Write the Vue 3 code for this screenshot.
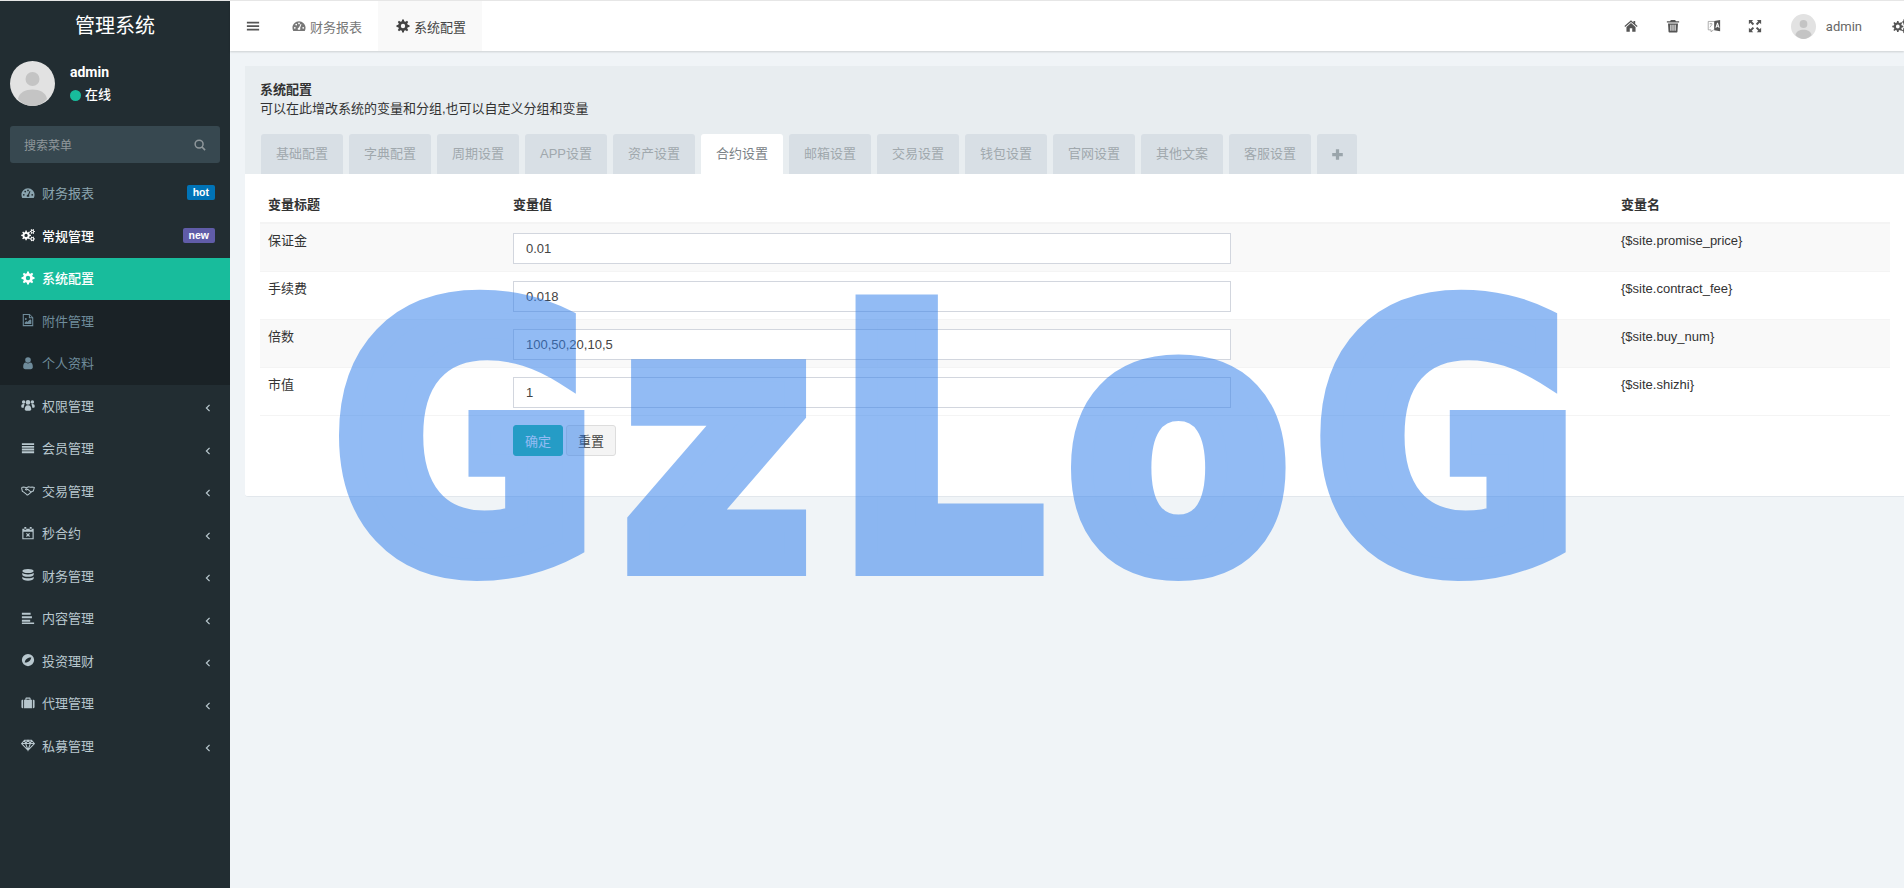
<script setup>
const dot = (x, y, r) => `M${x - r} ${y}a${r} ${r} 0 1 0 ${r * 2} 0a${r} ${r} 0 1 0 ${-r * 2} 0z`

// gear outline, teeth are plain trapezoids
const gear = (cx, cy, R, r, teeth, hole) => {
  let d = ''
  const step = (Math.PI * 2) / teeth
  for (let i = 0; i < teeth; i++) {
    const a = i * step
    const pts = [[a - step * 0.3, r], [a - step * 0.17, R], [a + step * 0.17, R], [a + step * 0.3, r]]
    pts.forEach(([t, l], j) => {
      const x = (cx + Math.cos(t) * l).toFixed(2)
      const y = (cy + Math.sin(t) * l).toFixed(2)
      d += `${i === 0 && j === 0 ? 'M' : 'L'}${x} ${y}`
    })
  }
  return d + 'z' + dot(cx, cy, hole)
}

const icons = {
  bars: { d: 'M1 3h14v2H1zM1 7h14v2H1zM1 11h14v2H1z' },
  dashboard: { d: 'M8 2.5C3.9 2.5.5 5.9.5 10c0 1.2.3 2.4.8 3.4.1.2.3.3.5.3h12.4c.2 0 .4-.1.5-.3.5-1 .8-2.2.8-3.4 0-4.1-3.4-7.5-7.5-7.5z' + dot(3.2, 10, 1) + dot(4.8, 6.4, 1) + dot(8, 5, 1) + dot(12.8, 10, 1) + 'M10.8 6l-1.6 4.2c.5.5.5 1.6-.2 2.1H7c-.8-.6-.7-2 .4-2.4.2-.1.4-.1.6-.1L9.8 5.6z' },
  cog: { d: gear(8, 8, 7.5, 5.6, 8, 2.5) },
  cogs: { d: gear(5.8, 8.5, 5.6, 4.1, 8, 1.9) + gear(13, 4, 2.9, 2.1, 6, 1) + gear(13, 12.5, 2.9, 2.1, 6, 1) },
  users: { d: dot(8, 5, 2.6) + dot(3, 4.5, 2) + dot(13, 4.5, 2) + 'M4.3 13.2c0-3 1-5 3.7-5s3.7 2 3.7 5c0 .9-.8 1.3-1.6 1.3H5.9c-.8 0-1.6-.4-1.6-1.3zM.3 9.5c0-1.8.7-2.6 2.7-2.6.4 0 .8.2 1.1.4C3.5 8.2 3.1 9.5 3.1 11H1.1C.6 11 .3 10.5.3 9.5zM15.7 9.500c0-1.8-.7-2.6-2.7-2.6-.4 0-.8.2-1.1.4.6.9 1 2.2 1 3.7h2c.5 0 .8-.5.8-1.5z' },
  list: { d: 'M1 2.5h14v2.2H1zM1 5.6h14v2.2H1zM1 8.7h14v2.2H1zM1 11.8h14V14H1z' },
  handshake: { s: 'M.6 5.2l2.6-.7 3.2.9L8.6 4.4l2.2.5 2-.4 2.6.7M.6 5.200l1 4.400 1.2.5 3.6 3c.8.6 1.6.5 2.2-.1l3.8-3.2 1.6-.6 1.4-4.500M6.400 5.400L5.200 7.600c.7.7 1.700.4 2.400-.5l4.200 3.600', w: 1.2 },
  calendar: { d: 'M1.5 3h13v12.2h-13zM2.8 6.5v7.4h10.4V6.5zM3.8 1h2.2v3.200H3.800zM10 1h2.200v3.200H10z', s: 'M6.200 8.400l3.600 3.600M9.800 8.400l-3.600 3.600', w: 1.3 },
  database: { d: 'M8 1c3.6 0 6.5 1 6.5 2.4S11.600 5.800 8 5.800 1.500 4.800 1.500 3.400 4.400 1 8 1zM1.500 5.500c1 1.200 3.600 1.900 6.500 1.900s5.500-.7 6.500-1.900v2.200c0 1.300-2.900 2.400-6.500 2.400S1.500 9 1.500 7.700zM1.500 9.900c1 1.200 3.600 1.900 6.500 1.900s5.500-.7 6.500-1.900v2.200c0 1.300-2.900 2.400-6.500 2.400s-6.500-1.100-6.500-2.400z' },
  align: { d: 'M1 2h10v2.200H1zM1 6h11.500v2.200H1zM1 10h9.500v2.200H1zM1 13h14v1.800H1z' },
  compass: { d: dot(8, 8, 7) + 'M4.200 10.800c.5-2.600 2-4.600 4.600-5.300 1-.3 2.400-.3 3-.3-.5 2.600-2 4.600-4.600 5.300-1 .3-2.400.3-3 .3z' },
  suitcase: { d: 'M.5 5.500c0-.8.6-1.300 1.300-1.300h.7V14h-.7c-.7 0-1.300-.5-1.300-1.300zM3.500 4.200H5V3c0-.8.6-1.300 1.300-1.300h3.400c.7 0 1.300.5 1.300 1.300v1.200h1.500V14h-9zM6.200 3v1.200h3.600V3zM13.500 4.200h.7c.7 0 1.300.5 1.300 1.300v7.200c0 .8-.6 1.300-1.300 1.300h-.7z' },
  diamond: { s: 'M4 2.500h8l3.300 3.800L8 14 .7 6.300zM.7 6.300h14.600M5.300 6.300L8 14l2.700-7.700M4 2.500l1.300 3.800L8 2.500l2.700 3.800L12 2.500', w: 1.2 },
  image: { d: 'M2 1h8l4 4v10H2zM3.200 2.200v11.600h9.600V6H9V2.200zM10.200 2.500v2.300h2.300z' + dot(5.5, 6.8, 1.1) + 'M4.200 12.500V11L6 9.200l1.200 1.200 3.300-3.300 1.300 1.300v4.100z' },
  user: { d: dot(8, 4.5, 3.2) + 'M2.500 12.500c0-3 1-5 2.800-5 .6.5 1.600 1 2.700 1s2.100-.5 2.700-1c1.800 0 2.800 2 2.800 5 0 1.500-1 2.500-2.400 2.500H4.900c-1.400 0-2.400-1-2.400-2.500z' },
  home: { d: 'M8 1.500L.5 8l.8 1L8 3.400 14.700 9l.8-1-2.700-2.300V2.200h-2V4zM8 4.600L2.800 9v5.500h3.800v-3.800h2.800v3.800h3.800V9z' },
  trash: { d: 'M5.500 1h5l.8 1.600H15V4H1V2.600h3.700zM2.300 5h11.400l-.6 9.600c0 .5-.5.9-1 .9H3.900c-.5 0-1-.4-1-.9zM5 6.500v7h1.200v-7zM7.400 6.500v7h1.200v-7zM9.800 6.500v7H11v-7z' },
  language: { d: 'M8.200 2.200L15 1v13l-6.800-1.200zM11.500 4.200L9.600 10h1.200l.4-1.200h1.600l.4 1.200h1.200l-1.900-5.800zM11.600 7.600l.4-1.600.4 1.600z', s: 'M8.200 2.800H1.400v9.600h3.200v2.200l3-2.200M3 5.500h3M4.500 4.500v1M3.300 9.500L5.800 6', w: .9 },
  expand: { d: 'M1 1h5L4.300 2.700 7 5.400 5.400 7 2.700 4.300 1 6zM15 1v5l-1.700-1.700L10.600 7 9 5.400l2.700-2.700L10 1zM1 15v-5l1.700 1.700L5.400 9 7 10.600l-2.700 2.700L6 15zM15 15h-5l1.700-1.700L9 10.600 10.600 9l2.700 2.700L15 10z' },
  search: { s: 'M6.800 1.500a5.300 5.300 0 1 0 0 10.600 5.300 5.300 0 0 0 0-10.600zM10.800 10.800l4 4', w: 2 },
  plus: { d: 'M6 1.500h4V6h4.500v4H10v4.500H6V10H1.500V6H6z' },
  angle: { s: 'M10.500 3L5.500 8l5 5', w: 2 }
}

const menu = [
  { icon: 'dashboard', name: '财务报表', badge: 'hot', dim: true },
  { icon: 'cogs', name: '常规管理', badge: 'new', open: true },
  { icon: 'cog', name: '系统配置', active: true },
  { icon: 'image', name: '附件管理', sub: true },
  { icon: 'user', name: '个人资料', sub: true },
  { icon: 'users', name: '权限管理', arrow: true },
  { icon: 'list', name: '会员管理', arrow: true },
  { icon: 'handshake', name: '交易管理', arrow: true },
  { icon: 'calendar', name: '秒合约', arrow: true },
  { icon: 'database', name: '财务管理', arrow: true },
  { icon: 'align', name: '内容管理', arrow: true },
  { icon: 'compass', name: '投资理财', arrow: true },
  { icon: 'suitcase', name: '代理管理', arrow: true },
  { icon: 'diamond', name: '私募管理', arrow: true }
]

const tabs = ['基础配置', '字典配置', '周期设置', 'APP设置', '资产设置', '合约设置', '邮箱设置', '交易设置', '钱包设置', '官网设置', '其他文案', '客服设置']

const rows = [
  { title: '保证金', value: '0.01', name: '{$site.promise_price}' },
  { title: '手续费', value: '0.018', name: '{$site.contract_fee}' },
  { title: '倍数', value: '100,50,20,10,5', name: '{$site.buy_num}' },
  { title: '市值', value: '1', name: '{$site.shizhi}' }
]
</script>

<template>
  <div class="app">
    <aside class="sidebar">
      <div class="logo">管理系统</div>
      <div class="user-panel">
        <svg class="avatar" viewBox="0 0 45 45">
          <circle cx="22.5" cy="22.5" r="22.5" fill="#e2e2e2" />
          <circle cx="22.5" cy="18" r="7" fill="#c4c4c4" />
          <path d="M8 38c1-6.500 7.500-9.500 14.500-9.500S36 31.500 37 38c-3.800 4.400-9 7-14.500 7S11.800 42.400 8 38z" fill="#c4c4c4" />
        </svg>
        <div class="user-info">
          <div class="user-name">admin</div>
          <div class="user-status"><i class="status-dot"></i>在线</div>
        </div>
      </div>
      <div class="search">
        <span>搜索菜单</span>
        <svg class="ico" viewBox="0 0 16 16"><path :d="icons.search.s" fill="none" stroke="currentColor" :stroke-width="icons.search.w" /></svg>
      </div>
      <ul class="menu">
        <li
          v-for="item in menu"
          :key="item.name"
          class="menu-item"
          :class="{ dim: item.dim, open: item.open, active: item.active, sub: item.sub }"
        >
          <svg class="ico" viewBox="0 0 16 16" fill-rule="evenodd">
            <path v-if="icons[item.icon].d" :d="icons[item.icon].d" fill="currentColor" />
            <path v-if="icons[item.icon].s" :d="icons[item.icon].s" fill="none" stroke="currentColor" :stroke-width="icons[item.icon].w" />
          </svg>
          <span class="menu-name">{{ item.name }}</span>
          <b v-if="item.badge" class="badge" :class="item.badge">{{ item.badge }}</b>
          <svg v-if="item.arrow" class="arrow" viewBox="0 0 16 16"><path :d="icons.angle.s" fill="none" stroke="currentColor" :stroke-width="icons.angle.w" /></svg>
        </li>
      </ul>
    </aside>

    <main class="main">
      <header class="navbar">
        <a class="toggle">
          <svg class="ico" viewBox="0 0 16 16"><path :d="icons.bars.d" fill="currentColor" /></svg>
        </a>
        <a class="nav-tab first">
          <svg class="ico" viewBox="0 0 16 16" fill-rule="evenodd"><path :d="icons.dashboard.d" fill="currentColor" /></svg>
          财务报表
        </a>
        <a class="nav-tab current">
          <svg class="ico" viewBox="0 0 16 16" fill-rule="evenodd"><path :d="icons.cog.d" fill="currentColor" /></svg>
          系统配置
        </a>
        <div class="nav-right">
          <a v-for="n in ['home', 'trash', 'language', 'expand']" :key="n" class="nav-icon">
            <svg class="ico" viewBox="0 0 16 16" fill-rule="evenodd">
              <path :d="icons[n].d" fill="currentColor" />
              <path v-if="icons[n].s" :d="icons[n].s" fill="none" stroke="#999" :stroke-width="icons[n].w" />
            </svg>
          </a>
          <svg class="nav-avatar" viewBox="0 0 45 45">
            <circle cx="22.5" cy="22.5" r="22.500" fill="#e2e2e2" />
            <circle cx="22.5" cy="18" r="7" fill="#c4c4c4" />
            <path d="M8 38c1-6.500 7.500-9.500 14.500-9.500S36 31.500 37 38c-3.800 4.400-9 7-14.500 7S11.800 42.400 8 38z" fill="#c4c4c4" />
          </svg>
          <span class="nav-name">admin</span>
          <svg class="ico nav-cogs" viewBox="0 0 16 16" fill-rule="evenodd"><path :d="icons.cogs.d" fill="currentColor" /></svg>
        </div>
      </header>

      <section class="content">
        <div class="panel">
          <div class="panel-head">
            <div class="panel-title">系统配置</div>
            <div class="panel-desc">可以在此增改系统的变量和分组,也可以自定义分组和变量</div>
            <ul class="tabs">
              <li v-for="t in tabs" :key="t" class="tab" :class="{ current: t === '合约设置' }">{{ t }}</li>
              <li class="tab add">
                <svg viewBox="0 0 16 16"><path :d="icons.plus.d" fill="currentColor" /></svg>
              </li>
            </ul>
          </div>
          <div class="panel-body">
            <table class="config">
              <colgroup>
                <col class="c1" />
                <col class="c2" />
                <col />
              </colgroup>
              <thead>
                <tr>
                  <th>变量标题</th>
                  <th>变量值</th>
                  <th>变量名</th>
                </tr>
              </thead>
              <tbody>
                <tr v-for="row in rows" :key="row.name">
                  <td>{{ row.title }}</td>
                  <td><input class="field" type="text" :value="row.value" /></td>
                  <td>{{ row.name }}</td>
                </tr>
              </tbody>
              <tfoot>
                <tr>
                  <td></td>
                  <td class="actions">
                    <button class="btn ok">确定</button>
                    <button class="btn reset">重置</button>
                  </td>
                  <td></td>
                </tr>
              </tfoot>
            </table>
          </div>
        </div>
      </section>
    </main>

    <div class="watermark">GzLoG</div>
  </div>
</template>

<style>
html, body {
  margin: 0;
  background: #f0f4f7;
}
</style>

<style scoped>
.app {
  position: relative;
  display: flex;
  min-height: 888px;
  box-sizing: border-box;
  border-top: 1px solid #e6e6e6;
  overflow: hidden;
  font-family: "Liberation Sans", "Noto Sans CJK SC", sans-serif;
  font-size: 13px;
  color: #333;
}

.ico {
  width: 14px;
  height: 14px;
  flex: none;
}

/* sidebar */
.sidebar {
  width: 230px;
  flex: none;
  background: #222d32;
}
.logo {
  height: 50px;
  line-height: 50px;
  text-align: center;
  color: #fff;
  font-size: 20px;
}
.user-panel {
  display: flex;
  gap: 15px;
  padding: 10px;
  color: #fff;
}
.avatar {
  width: 45px;
  height: 45px;
  flex: none;
}
.user-name {
  margin-top: 1px;
  font-family: Roboto, sans-serif;
  font-weight: 700;
  font-size: 14px;
  line-height: 20px;
}
.user-status {
  display: flex;
  align-items: center;
  gap: 4px;
  margin-top: 3px;
  font-weight: 500;
  line-height: 20px;
}
.status-dot {
  width: 11px;
  height: 11px;
  border-radius: 50%;
  background: #18bc9c;
}
.search {
  display: flex;
  align-items: center;
  justify-content: space-between;
  height: 37px;
  margin: 10px 10px 9.5px;
  padding: 0 14px;
  box-sizing: border-box;
  border-radius: 3px;
  background: #374850;
  color: #8f979b;
  font-size: 12px;
}
.search .ico {
  width: 12px;
  height: 12px;
}
.menu {
  margin: 0;
  padding: 0;
  list-style: none;
}
.menu-item {
  display: flex;
  align-items: center;
  height: 42.5px;
  padding: 0 15px 2px 21px;
  box-sizing: border-box;
  color: #b8c7ce;
}
.menu-name {
  margin-left: 7px;
}
.menu-item.dim {
  color: #8aa4af;
}
.menu-item.open {
  color: #fff;
  font-weight: 500;
}
.menu-item.active {
  background: #18bc9c;
  color: #fff;
  font-weight: 500;
}
.menu-item.sub {
  background: #1a2226;
  color: #6f8c9b;
}
.badge {
  margin-left: auto;
  padding: 0 6px;
  height: 15px;
  line-height: 15px;
  border-radius: 2px;
  color: #fff;
  font-size: 10.5px;
  font-weight: 700;
}
.badge.hot {
  background: #0073b7;
}
.badge.new {
  background: #605ca8;
}
.arrow {
  width: 10px;
  height: 10px;
  margin: 6px 2px 0 auto;
  color: #b8c7ce;
}

/* top bar */
.main {
  flex: 1;
  min-width: 0;
}
.navbar {
  position: relative;
  display: flex;
  height: 50px;
  background: #fff;
  color: #666;
  box-shadow: 0 1px 2px rgba(0, 0, 0, .15);
  overflow: hidden;
}
.toggle {
  width: 45px;
  display: flex;
  align-items: center;
  justify-content: center;
  color: #555;
}
.nav-tab {
  display: flex;
  align-items: center;
  gap: 4px;
  width: 104px;
  padding-left: 18px;
  box-sizing: border-box;
  color: #777;
}
.nav-tab.first {
  width: 103px;
  padding-left: 17px;
}
.nav-tab.current {
  background: #f9f9f9;
  color: #444;
}
.nav-right {
  display: flex;
  align-items: center;
  margin: 0 -4px 0 auto;
  color: #555;
}
.nav-icon {
  display: flex;
  justify-content: center;
  width: 41.3px;
}
.nav-avatar {
  width: 25px;
  height: 25px;
  margin-left: 15px;
}
.nav-name {
  margin-left: 10px;
  font-family: Roboto, sans-serif;
  font-size: 13px;
  color: #666;
}
.nav-cogs {
  width: 16px;
  height: 16px;
  margin-left: 30px;
}

/* panel */
.content {
  padding: 15px 0 0 15px;
}
.panel {
  background: #fff;
  border-bottom: 1px solid #e2e7ec;
  border-radius: 3px 0 0 3px;
}
.panel-head {
  padding: 15px 0 0 15px;
  background: #e8edf0;
  line-height: 18.5px;
}
.panel-title {
  font-weight: 700;
}
.tabs {
  display: flex;
  gap: 6px;
  height: 40px;
  margin: 16px 0 0 1px;
  padding: 0;
  list-style: none;
}
.tab {
  width: 82px;
  line-height: 40px;
  text-align: center;
  border-radius: 3px 3px 0 0;
  background: #d8dfe5;
  color: #a0a8ad;
}
.tab.current {
  background: #fff;
  color: #7b8287;
}
.tab.add {
  width: 40px;
  display: flex;
  align-items: center;
  justify-content: center;
  color: #9aa5ab;
}
.tab.add svg {
  width: 13px;
  height: 13px;
}
.panel-body {
  padding: 14px 14px 32px 15px;
}
.config {
  width: 100%;
  border-collapse: collapse;
  table-layout: fixed;
}
.c1 {
  width: 245px;
}
.c2 {
  width: 1108px;
}
.config th {
  padding: 8px;
  text-align: left;
  line-height: 18px;
  font-weight: 700;
  border-bottom: 2px solid #f4f4f4;
}
.config td {
  padding: 8px;
  height: 31px;
  vertical-align: top;
  line-height: 18px;
}
.config td.actions {
  padding-top: 9px;
}
.config tbody td {
  border-bottom: 1px solid #f4f4f4;
}
.config tbody tr:nth-child(odd) {
  background: #f9f9f9;
}
.field {
  display: block;
  width: 718px;
  height: 31px;
  margin: 1px 0 -1px 0;
  padding: 0 12px;
  box-sizing: border-box;
  border: 1px solid #d2d6de;
  background: #fff;
  font: 13px "Liberation Sans", sans-serif;
  color: #444;
  outline: none;
}
.btn {
  width: 50px;
  height: 31px;
  margin-right: 3px;
  padding: 0;
  border-radius: 3px;
  font: 13px "Liberation Sans", "Noto Sans CJK SC", sans-serif;
}
.btn.ok {
  border: 1px solid #18bc9c;
  background: #18bc9c;
  color: #fff;
}
.btn.reset {
  border: 1px solid #ddd;
  background: #f4f4f4;
  color: #444;
}

/* big mark lying over the whole page */
.watermark {
  position: absolute;
  left: 334px;
  top: 181px;
  font-family: "DejaVu Sans Condensed", "DejaVu Sans", sans-serif;
  font-stretch: condensed;
  font-weight: 700;
  font-size: 356px;
  line-height: 520px;
  letter-spacing: 27px;
  color: rgb(50, 128, 236);
  -webkit-text-stroke: 22px rgb(50, 128, 236);
  opacity: .53;
  white-space: nowrap;
  pointer-events: none;
}
</style>
